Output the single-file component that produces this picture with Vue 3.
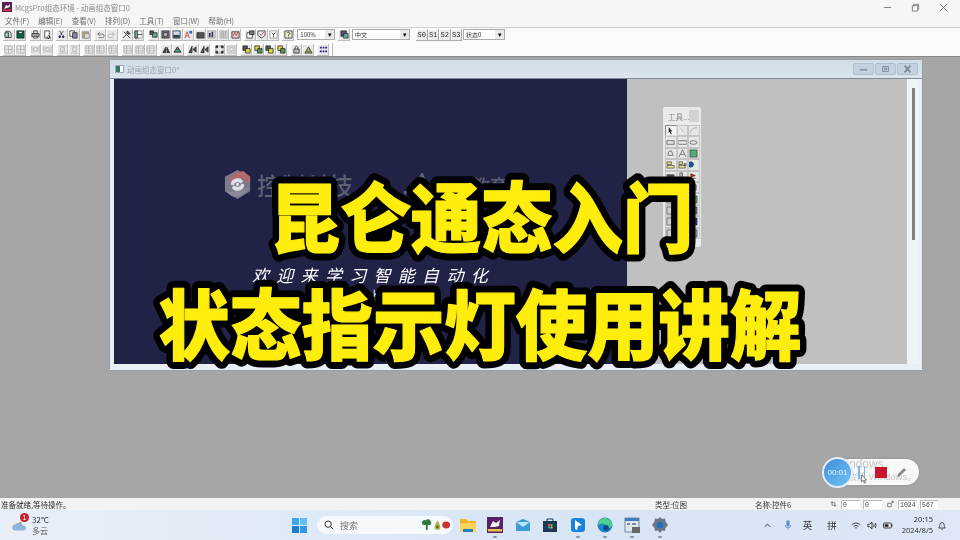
<script setup>
const menus = ['文件(F)', '编辑(E)', '查看(V)', '排列(D)', '工具(T)', '窗口(W)', '帮助(H)']
const K = '#222', G = '#8a8a8a', L = '#a8a8a8'
const icons = {
  doc: [['M2 1.500h4l2 2v5H2z', '#ddd', K], ['M1 3h4v5H1z', '#9cc', K]],
  save: [['M1 1h8v8H1z', '#064', K], ['M3 1.500h4v2.500H3z', '#eee', K]],
  print: [['M3 1h4v3H3z', '#eee', K], ['M1 4h8v3.500H1z', '#aaa', K], ['M3 7h4v2H3z', '#fff', K]],
  prev: [['M2 1h5v8H2z', '#fff', K], ['M6 6.500a1.500 1.500 0 1 0 .1 0M7 8l2 1.500', 'none', K]],
  cut: [['M3 1l3 5M7 1L4 6', 'none', K], ['M2 7.500a1 1 0 1 0 2 0a1 1 0 1 0-2 0M6 7.500a1 1 0 1 0 2 0a1 1 0 1 0-2 0', '#239', K]],
  copy: [['M1 1h5v6H1z', '#fff', K], ['M4 3h5v6H4z', '#88a', K]],
  paste: [['M1.500 2h7v7h-7z', '#b9a26a', G], ['M4 4h5v5H4z', '#ddd', G]],
  undo: [['M2 4.500h5a2 2 0 0 1 0 4H3M2 4.500l2-2M2 4.500l2 2', 'none', '#555']],
  redo: [['M8 4.500H3a2 2 0 0 0 0 4h4M8 4.500l-2-2M8 4.500l-2 2', 'none', L]],
  tools: [['M1 9l5-5M2 2l7 7M6 1l3 3-2 1-2-2z', '#666', K]],
  props: [['M1 1h8v8H1z', '#fff', G], ['M1 1h3v8H1zM4 5h5', '#7a9', K]],
  gridA: [['M1 1h4v4H1z', '#556', K], ['M4 3h5v5H4z', '#6a8', K]],
  gridB: [['M1 1h8v8H1z', '#778', K], ['M3 3h4v4H3z', '#ccc', K]],
  gridC: [['M1 1h8v8H1z', '#cde', K], ['M2 6h6v2H2z', '#156', K]],
  aa: [['M1 9l2.500-7L6 9M2 6.500h3', 'none', '#c22'], ['M6 1h3v3H6z', '#26c', 'none']],
  bar: [['M1 3h8v6H1z', '#555', K]],
  chart: [['M1 1h8v8H1z', '#eee', G], ['M2 3h2v5H2zM5 2h2v6H5z', '#335', 'none']],
  dots: [['M1 1h8v8H1z', '#ddd', L], ['M2 3h6M2 5h6M2 7h6M3 1v8M5 1v8M7 1v8', 'none', L]],
  pic: [['M1 2h8v7H1z', '#dcc', K], ['M2 7l2-4 2 3 2-4', 'none', '#c22']],
  win: [['M1 3h6v6H1z', '#fff', K], ['M4 1h5v4H4z', '#778', K]],
  check: [['M1 1h8v5L5 9 1 6z', '#eef', K], ['M3 4l1.500 2L8 2', 'none', '#a22']],
  down: [['M1 1h8v8H1z', '#fff', G], ['M3 3l2 2 2-2M5 5v3', 'none', K]],
  help: [['M1 1h8v8H1z', '#eec', K], ['M3.500 3.500a1.500 1.500 0 1 1 1.500 2v1M5 7.500v1', 'none', K]],
  lang: [['M1 1h6v6H1z', '#557', K], ['M4 4h5v5H4z', '#6a9', K]],
  a1: [['M1 1h8v8H1zM1 5h8M5 1v8', 'none', L]],
  a2: [['M1 1v8M9 1v8M3 3h4v4H3z', 'none', L]],
  a3: [['M1 1h8M1 9h8M3 3h4v4H3z', 'none', L]],
  a4: [['M1 1h8v8H1zM1 3.500h8M1 6.500h8M4 1v8', '#eee', L]],
  tri1: [['M1 8.500l3-6v6zM5.500 8.500v-6l3 6z', '#444', K]],
  tri2: [['M1 8l4-6 4 6z', '#666', K], ['M4 5h2v3H4z', '#2a7', 'none']],
  tri3: [['M1 8.500l3.500-7v7zM9 2L5.500 5 9 8z', '#555', K]],
  size: [['M1 1h8v8H1z', 'none', G], ['M1 1h2v2H1zM7 1h2v2H7zM1 7h2v2H1zM7 7h2v2H7z', '#444', K]],
  size2: [['M1 1h8v8H1zM3 3h4v4H3z', 'none', L]],
  y1: [['M1 1h5v5H1z', '#555', K], ['M4 4h5v5H4z', '#dd3', K]],
  y2: [['M1 1h5v5H1z', '#dd3', K], ['M4 4h5v5H4z', '#595', K]],
  lock: [['M2 4.500h6V9H2z', '#bbb', K], ['M3.500 4.500V3a1.500 1.500 0 0 1 3 0v1.500', 'none', K]],
  key: [['M1 9l4-7 4 7z', '#8b6', K], ['M3 7h4', 'none', '#c22']],
  dotgrid: [['M1 2h2v2H1zM4 2h2v2H4zM7 2h2v2H7zM1 6h2v2H1zM4 6h2v2H4zM7 6h2v2H7z', '#23238e', 'none']]
}
const row1 = [
  ['doc', 'save'], ['print', 'prev'], ['cut', 'copy', 'paste'], ['undo', 'redo'], ['tools', 'props'],
  ['gridA', 'gridB', 'gridC', 'aa', 'bar', 'chart', 'dots', 'pic'], ['win', 'check', 'down'], ['help']
]
const row2 = [
  ['a1', 'a1'], ['a2', 'a2'], ['a3', 'a3'], ['a4', 'a4', 'a4'], ['a4', 'a4', 'a4'], ['tri1', 'tri2'],
  ['tri3', 'tri3'], ['size', 'size2'], ['y1', 'y2', 'y1', 'y2'], ['lock', 'key'], ['dotgrid']
]
const stages = ['S0', 'S1', 'S2', 'S3']
const toolbox = [
  [['M3 1l4 5H5l1.500 3-1 .5L4 6.500 3 8z', K, 'none'], ['M2 2l6 6', 'none', L], ['M1 8a8 8 0 0 1 8-6', 'none', G]],
  [['M1 3h8v4H1z', 'none', K], ['M1.500 3h7a1 1 0 0 1 0 4h-7a1 1 0 0 1 0-4', 'none', K], ['M1 5a4 2 0 0 1 8 0a4 2 0 0 1-8 0', 'none', K]],
  [['M2 7l1-4 3-1 2 5z', 'none', K], ['M1 9l4-8 4 8M3 6h4', 'none', K], ['M1 1h8v8H1z', '#5a7', K]],
  [['M1 2h5v3H1zM1 6h8v3H1z', '#dd8', K], ['M1 2h4v3H1zM1 6h7v3H1zM7 4h2v2H7z', '#dd8', K], ['M2 2a3 3 0 1 0 .1 0', '#15a', K]],
  [['M1 3h8v6H1z', '#555', K], ['M2 1h3v8H2z', '#bbb', K], ['M2 2l5 2-5 2zM2 7h6', '#c22', K]],
  [['M1 1h8v8H1z', '#ccc', K], ['M1 1h8v8H1z', '#aaa', K], ['M2 2h6v6H2z', '#689', K]],
  [['M1 1h8v8H1z', '#ccc', K], ['M2 3h6v4H2z', '#ddd', K], ['M1 1h8v8H1z', '#5a5', K]],
  [['M1 1h8v8H1z', '#ccc', K], ['M2 3h6v4H2z', '#bbb', K], ['M1 1h8v8H1z', '#778', K]],
  [['M1 1h8v8H1z', '#ccc', K], ['M2 3h6v4H2z', '#bbb', K], ['M1 1h8v8H1z', '#33a', K]],
  [['M1 1h8v8H1z', '#ccc', K], ['M2 3h6v4H2z', '#bbb', K], ['M1 1h8v8H1z', '#8ab', K]]
]
const lines = [
  { text: '昆仑通态入门', at: 'translate(481.5 246.5) scale(.93 1)' },
  { text: '状态指示灯使用讲解', at: 'translate(480 353.5) scale(.94 1)' }
]
</script>

<template>
  <div class="screen">
    <header class="titlebar">
      <svg class="applogo" viewBox="0 0 10 10"><rect width="10" height="10" fill="#5a1c58"/><path d="M2 7l2-4 2 1 2-2v3L5 6z" fill="#eee"/><rect x="1" y="7.500" width="8" height="1.500" fill="#d33"/></svg>
      <span class="apptitle">McgsPro组态环境 - 动画组态窗口0</span>
      <div class="caption">
        <svg viewBox="0 0 10 10"><path d="M1 5h8" stroke="#777" fill="none"/></svg>
        <svg viewBox="0 0 10 10"><path d="M1.500 3h6v6h-6zM3 3V1.500h5.500V7H7.500" stroke="#777" fill="none"/></svg>
        <svg viewBox="0 0 10 10"><path d="M1 1l8 8M9 1l-8 8" stroke="#777" fill="none"/></svg>
      </div>
    </header>
    <nav class="menubar"><span v-for="m in menus" :key="m">{{ m }}</span></nav>
    <div class="toolbar first">
      <div class="tools">
        <div v-for="(g, i) in row1" :key="i" class="group">
          <i v-for="(k, j) in g" :key="j" class="btn"><svg viewBox="0 0 10 10"><path v-for="(p, n) in icons[k]" :key="n" :d="p[0]" :fill="p[1]" :stroke="p[2]" stroke-width=".8"/></svg></i>
        </div>
      </div>
      <div class="combo zoomc"><span>100%</span><b>▾</b></div>
      <i class="btn langbtn"><svg viewBox="0 0 10 10"><path v-for="(p, n) in icons.lang" :key="n" :d="p[0]" :fill="p[1]" :stroke="p[2]" stroke-width=".8"/></svg></i>
      <div class="combo langc"><span>中文</span><b>▾</b></div>
      <div class="stages"><span v-for="s in stages" :key="s">{{ s }}</span></div>
      <div class="combo statec"><span>状态0</span><b>▾</b></div>
    </div>
    <div class="toolbar second">
      <div class="tools boxed">
        <div v-for="(g, i) in row2" :key="i" class="group">
          <i v-for="(k, j) in g" :key="j" class="btn"><svg viewBox="0 0 10 10"><path v-for="(p, n) in icons[k]" :key="n" :d="p[0]" :fill="p[1]" :stroke="p[2]" stroke-width=".8"/></svg></i>
        </div>
      </div>
    </div>

    <main class="workspace">
      <section class="window">
        <div class="wintitle">
          <i class="winicon"></i>
          <span>动画组态窗口0*</span>
          <div class="winbtns">
            <i><svg viewBox="0 0 21 12"><path d="M6 7h9" stroke="#7a8794" stroke-width="1.500" fill="none"/></svg></i>
            <i><svg viewBox="0 0 21 12"><path d="M7 3h7v6H7zM9 5h3v2H9z" stroke="#7a8794" fill="none"/></svg></i>
            <i><svg viewBox="0 0 21 12"><path d="M7 2l7 8M14 2l-7 8" stroke="#7a8794" stroke-width="2" fill="none"/></svg></i>
          </div>
        </div>
        <div class="winbody">
          <div class="canvas">
            <div class="image">
              <div class="brand">
                <svg viewBox="0 0 32 32"><path d="M16 1l13 7v15l-13 8-13-8V8z" fill="#7a7a8c"/><path d="M6 13Q10 3 22 2l7 6v8q-5-7-13-6-6 1-10 3z" fill="#b56a6a"/><path d="M27 19Q22 30 10 28l-6-5q6 2 13-1 6-2 10-3z" fill="#8a8a9a"/><path d="M9 16a7 7 0 0 1 13-3l-3 2a4 4 0 0 0-7 2zM23 16a7 7 0 0 1-13 3l3-2a4 4 0 0 0 7-2z" fill="#e0e0e6"/><circle cx="16" cy="16" r="1.500" fill="#fff"/></svg>
                <span class="brandtext">控制科技</span>
                <i class="brandrule"></i>
                <svg class="wave" viewBox="0 0 26 24"><path d="M2 20Q14 18 20 2q6 12-4 20" fill="none" stroke="#66687c" stroke-width="3"/></svg>
                <span class="brandtext edu">智能教育</span>
              </div>
              <p class="slogan">欢迎来学习智能自动化</p>
              <span class="scrap">k</span>
            </div>
          </div>
          <div class="scrollbar"><i></i></div>
        </div>
      </section>

      <aside class="toolbox">
        <div class="tbhead"><span>工具...</span><i></i></div>
        <div class="tbgrid">
          <template v-for="(r, i) in toolbox" :key="i">
            <i v-for="(p, j) in r" :key="j" :class="{ active: i === 0 && j === 0 }"><svg viewBox="0 0 10 10"><path :d="p[0]" :fill="p[1]" :stroke="p[2]" stroke-width=".6"/></svg></i>
          </template>
        </div>
      </aside>

      <div class="recorder">
        <span class="watermark w1">Windows</span>
        <span class="watermark w2">激活 Windows。</span>
        <div class="rectime">00:01</div>
        <div class="pause"><i></i><i></i></div>
        <i class="stop"></i>
        <svg class="pen" viewBox="0 0 12 12"><path d="M1 11l1-3 6-6 2 2-6 6z" fill="#888"/></svg>
        <svg class="cursor" viewBox="0 0 10 14"><path d="M1 1v10l2.500-2 1.500 4 1.500-.6L5 8.500h3z" fill="#fff" stroke="#222" stroke-width=".8"/></svg>
      </div>
    </main>

    <footer class="statusbar">
      <span class="ready">准备就绪,等待操作。</span>
      <span class="stype">类型:位图</span>
      <span class="sname">名称:控件6</span>
      <svg class="sic" viewBox="0 0 10 10"><path d="M1 3h6v6M3 1v6h6" fill="none" stroke="#666"/></svg>
      <span class="sbox">0</span><span class="sbox">0</span>
      <svg class="sic second-ic" viewBox="0 0 10 10"><path d="M1 4h5v5H1zM7 1h2v2H7z" fill="none" stroke="#555"/></svg>
      <span class="sbox">1024</span><span class="sbox small">567</span>
    </footer>

    <div class="taskbar">
      <div class="weather">
        <svg viewBox="0 0 20 18"><path d="M2 8L12 4l-1 4z" fill="#e8a63c"/><path d="M3 15a3.500 3.500 0 0 1 1-7 5 5 0 0 1 9 1 3 3 0 0 1 1 6z" fill="#8fb4dc"/></svg>
        <b class="badge">1</b>
        <div class="wtext"><span>32°C</span><span class="cloud">多云</span></div>
      </div>
      <div class="center">
        <svg class="winlogo" viewBox="0 0 16 16"><path d="M0 0h7.500v7.500H0z" fill="#3fa7e6"/><path d="M8.500 0H16v7.500H8.500z" fill="#5cc0f2"/><path d="M0 8.500h7.500V16H0z" fill="#1a7fd0"/><path d="M8.500 8.500H16V16H8.500z" fill="#2f98e0"/></svg>
        <div class="search">
          <svg viewBox="0 0 12 12"><circle cx="5" cy="5" r="3.800" fill="none" stroke="#333" stroke-width="1.200"/><path d="M8 8l3 3" stroke="#333" stroke-width="1.200"/></svg>
          <span>搜索</span>
          <div class="veg">
            <svg viewBox="0 0 30 12"><path d="M1 4a3 3 0 0 1 4-3 3 3 0 0 1 5 1 2.500 2.500 0 0 1-1 4H7v5H5V6H3a2 2 0 0 1-2-2z" fill="#2e7a3c"/><path d="M17 1q3 5 3 7a3 3 0 0 1-6 0q0-2 3-7z" fill="#a9b54a"/><circle cx="17" cy="8" r="1.400" fill="#7a5a20"/><ellipse cx="26" cy="6" rx="4" ry="3.500" fill="#c8352d"/></svg>
          </div>
        </div>
        <span class="app"><svg viewBox="0 0 16 16"><path d="M0 2h6l2 2h8v11H0z" fill="#f0b429"/><path d="M0 6h16v9H0z" fill="#fad45a"/><path d="M3 12h10v3H3z" fill="#1c7fc4"/></svg></span>
        <span class="app run"><svg viewBox="0 0 16 16"><rect width="16" height="16" fill="#5b1f66"/><path d="M3 10l3-6 3 2 4-3-1 6-4 1z" fill="#eee"/><rect x="1" y="12" width="14" height="2.500" fill="#e8c547"/></svg></span>
        <span class="app"><svg viewBox="0 0 16 16"><path d="M1 5l7-3 7 3v9H1z" fill="#3c9ad8"/><path d="M1 5l7 5 7-5" fill="#bfe3f7"/></svg></span>
        <span class="app"><svg viewBox="0 0 16 16"><path d="M1 4h14v11H1z" fill="#1c3a56"/><path d="M5 4V2h6v2" fill="none" stroke="#1c3a56"/><path d="M6 7h2v2H6z" fill="#e25a3c"/><path d="M8.500 7h2v2h-2z" fill="#7cb342"/><path d="M6 9.500h2v2H6z" fill="#29a8e0"/><path d="M8.500 9.500h2v2h-2z" fill="#f4c430"/></svg></span>
        <span class="app run"><svg viewBox="0 0 16 16"><rect x="1" y="1" width="14" height="14" rx="3" fill="#1a83e0"/><path d="M5 3l7 5-4 1-1 4-2-1z" fill="#fff"/></svg></span>
        <span class="app run"><svg viewBox="0 0 16 16"><circle cx="8" cy="8" r="7.500" fill="#1d88c9"/><path d="M1 8a7 7 0 0 1 14 0q0 3-4 3-3 0-2-3-3-3-8 0z" fill="#4fd08a"/><circle cx="9" cy="11" r="3" fill="#0d4f8b"/></svg></span>
        <span class="app run"><svg viewBox="0 0 16 16"><rect x="1" y="1" width="14" height="14" fill="#dfe6ee" stroke="#7a8aa0"/><path d="M1 1h14v3H1z" fill="#3f7fc0"/><path d="M3 6h3v2H3zM8 6h4v2H8z" fill="#88a"/><rect x="8" y="10" width="8" height="6" fill="#666"/></svg></span>
        <span class="app run"><svg viewBox="0 0 16 16"><path d="M8 0l2 2 3-.5.500 3L16 8l-2.500 3-.5 3-3-.5L8 16l-2-2.500-3 .5-.5-3L0 8l2.500-3.500.5-3 3 .5z" fill="#6d7480"/><circle cx="8" cy="8" r="3.200" fill="#1f6fbf"/></svg></span>
      </div>
      <div class="tray">
        <svg class="chev" viewBox="0 0 10 6"><path d="M1 5l4-4 4 4" fill="none" stroke="#222" stroke-width="1.200"/></svg>
        <svg class="mic" viewBox="0 0 10 14"><rect x="3" y="1" width="4" height="8" rx="2" fill="#5a8ed0"/><path d="M1.500 7a3.500 3.500 0 0 0 7 0M5 11v2" fill="none" stroke="#5a8ed0"/></svg>
        <span class="ime">英</span>
        <span class="ime pin">拼</span>
        <svg class="sys" viewBox="0 0 12 10"><path d="M1 4q5-4 10 0M3 6q3-2.500 6 0M5 8q1-1 2 0" fill="none" stroke="#222"/></svg>
        <svg class="sys" viewBox="0 0 12 10"><path d="M1 3.500h2L6 1v8L3 6.500H1z" fill="none" stroke="#222"/><path d="M8 3q1 2 0 4M10 2q1.500 3 0 6" fill="none" stroke="#222"/></svg>
        <svg class="sys" viewBox="0 0 12 10"><rect x=".5" y="2" width="9.500" height="6" rx="1" fill="none" stroke="#222"/><rect x="2" y="3.500" width="4.500" height="3" fill="#222"/><path d="M11 4v2" stroke="#222"/></svg>
        <div class="clock"><span>20:15</span><span>2024/8/5</span></div>
        <svg class="bell" viewBox="0 0 12 12"><path d="M2 9q1.500-1 1.500-4a2.500 2.500 0 0 1 5 0q0 3 1.500 4zM5 10.500h2" fill="none" stroke="#333"/></svg>
      </div>
    </div>

    <svg class="headline" viewBox="0 0 960 540">
      <g v-for="l in lines" :key="l.text" :transform="l.at">
        <text class="outline" aria-hidden="true">{{ l.text }}</text>
        <text class="face">{{ l.text }}</text>
      </g>
    </svg>
  </div>
</template>

<style scoped>
.screen { position: relative; width: 960px; height: 540px; overflow: hidden; display: flex; flex-direction: column; font-family: "Noto Sans CJK SC", "Noto Sans", sans-serif; color: #555; background: #a5a5a5; filter: blur(.35px); }
.screen * { box-sizing: border-box; }
i { display: block; font-style: normal; }
.titlebar { height: 14px; display: flex; align-items: center; padding-left: 2px; background: #f6f6f6; font-size: 7.500px; color: #8c8c8c; flex: none; }
.applogo { width: 10px; height: 10px; margin-right: 3px; }
.caption { margin-left: auto; display: flex; gap: 19px; padding-right: 12px; }
.caption svg { width: 9px; height: 9px; }
.menubar { height: 13px; display: flex; align-items: center; gap: 9px; padding-left: 5px; background: #f6f6f6; font-size: 7.500px; color: #6c6c6c; flex: none; }
.toolbar { height: 14px; display: flex; align-items: center; padding-left: 3px; background: #fafafa; flex: none; border-top: 1px solid #d0d0d0; }
.toolbar.second { height: 15px; border-top: 0; align-items: flex-start; padding-top: 2px; }
.tools { display: flex; height: 13px; align-items: center; }
.tools.boxed { border-right: 1px solid #bbb; height: 13px; }
.group { display: flex; margin-right: 3.200px; }
.second .group { margin-right: 3.400px; }
.btn { width: 11.700px; height: 12px; display: flex; align-items: center; justify-content: center; background: #e8e8e8; box-shadow: inset -1px -1px 0 #bdbdbd, inset 1px 1px 0 #fff; }
.btn svg { width: 9px; height: 9px; }
.combo { height: 11px; display: flex; align-items: center; background: #fff; border: 1px solid #aaa; font-size: 6px; color: #333; padding-left: 2px; }
.combo span { flex: 1; }
.combo b { width: 9px; height: 9px; background: #e8e8e8; text-align: center; font-size: 7px; line-height: 9px; color: #000; font-weight: 400; }
.zoomc { width: 38px; margin-left: 0; }
.langbtn { margin-left: 3px; margin-right: 2px; }
.langc { width: 58px; }
.stages { display: flex; margin-left: 6px; }
.stages span { width: 11.500px; height: 12px; font: 7px "Liberation Mono", monospace; text-align: center; line-height: 12px; color: #333; background: #ececec; box-shadow: inset -1px -1px 0 #aaa, inset 1px 1px 0 #fff; }
.statec { width: 42px; margin-left: 1px; }
.workspace { position: relative; flex: 1; background: #a6a6a6; border-top: 1px solid #888; }
.window { position: absolute; left: 109px; top: 2px; width: 814px; height: 312px; background: #e9eff5; border: 1px solid #9a9fa5; border-radius: 3px 3px 0 0; display: flex; flex-direction: column; }
.wintitle { height: 18px; flex: none; display: flex; align-items: center; padding-left: 5px; font-size: 7.500px; color: #9aa4ae; background: linear-gradient(#cfdce6, #dbe5ed); }
.winicon { width: 9px; height: 8px; margin-right: 3px; background: linear-gradient(90deg, #2f7a5c 50%, #fff 50%); border: 1px solid #9ab; }
.winbtns { margin-left: auto; display: flex; gap: 1px; padding-right: 4px; }
.winbtns i { width: 21px; height: 12px; background: #c3d2de; border: 1px solid #aebfce; border-radius: 2px; display: flex; }
.winbtns svg { width: 100%; height: 100%; }
.winbody { flex: 1; display: flex; padding: 0 3px 6px 4px; min-height: 0; border-top: 1px solid #7d8b98; }
.canvas { flex: 1; background: #c0c0c0; }
.image { position: relative; width: 513px; height: 100%; background: #202345; overflow: hidden; }
.brand { position: absolute; left: 108px; top: 90px; display: flex; align-items: center; white-space: nowrap; }
.brand > svg:first-child { width: 31px; height: 31px; margin-right: 4px; }
.brandtext { font-size: 24px; font-weight: 500; line-height: 30px; color: #5d5f72; }
.brandrule { width: 2px; height: 20px; background: #5d5f72; margin: 0 27px 0 20px; }
.wave { width: 26px; height: 24px; margin-right: 8px; }
.edu { font-size: 18px; }
.slogan { position: absolute; left: 138px; top: 185px; margin: 0; font-size: 17px; line-height: 22px; letter-spacing: 7.300px; font-style: italic; font-weight: 400; color: #fff; white-space: nowrap; }
.scrap { position: absolute; left: 259px; top: 209px; font-size: 9px; line-height: 12px; color: #fff; }
.scrollbar { width: 12px; flex: none; background: #f0f3f6; display: flex; justify-content: center; padding-top: 9px; }
.scrollbar i { width: 3px; height: 152px; background: #808080; }
.toolbox { position: absolute; left: 663px; top: 50px; width: 38px; height: 140px; padding: 1px; background: #e9eaeb; border-radius: 2px; }
.tbhead { height: 16px; display: flex; justify-content: space-between; align-items: center; padding: 0 1px 0 4px; font-size: 7.500px; color: #8a8a8a; white-space: nowrap; }
.tbhead i { width: 10px; height: 12px; background: #d2d2d2; flex: none; }
.tbgrid { display: grid; grid-template-columns: repeat(3, 11.500px); grid-auto-rows: 11.400px; margin-top: 1px; margin-left: 1px; }
.tbgrid i { border: 1px solid #c4c4c4; background: #e6e6e6; display: flex; align-items: center; justify-content: center; }
.tbgrid i.active { background: #f4f4f4; border-color: #888 #ddd #ddd #888; }
.tbgrid svg { width: 9px; height: 9px; }
.recorder { position: absolute; left: 823px; top: 402px; width: 96px; height: 26px; border-radius: 13px; background: rgba(255, 255, 255, .92); box-shadow: 0 0 3px rgba(0, 0, 0, .15); }
.watermark { position: absolute; color: #c6c6c6; white-space: nowrap; font-family: "Liberation Sans", "Noto Sans CJK SC", sans-serif; }
.w1 { left: 12px; top: -2px; font-size: 12px; line-height: 14px; }
.w2 { left: 24px; top: 12px; font-size: 9.500px; line-height: 12px; }
.rectime { position: absolute; left: -1px; top: -2px; width: 31px; height: 31px; border: 2px solid #e2eefa; border-radius: 50%; background: linear-gradient(135deg, #3d8fdb, #74c0f5); color: #e8f4ff; font: 8px/27px "Liberation Sans", sans-serif; text-align: center; }
.pause { position: absolute; left: 35px; top: 7px; display: flex; gap: 4px; }
.pause i { width: 1.500px; height: 13px; background: #7fb5e0; }
.stop { position: absolute; left: 52px; top: 8px; width: 12px; height: 11px; background: #c8142c; }
.pen { position: absolute; left: 73px; top: 7px; width: 12px; height: 12px; }
.cursor { position: absolute; left: 38px; top: 15px; width: 7px; height: 10px; }
.statusbar { height: 12px; flex: none; display: flex; align-items: center; position: relative; background: #f3f3f3; font-size: 7.500px; color: #333; }
.ready { margin-left: 1px; width: 654px; }
.stype { width: 100px; }
.sname { width: 75px; }
.sic { width: 7px; height: 8px; margin-right: 4px; }
.second-ic { margin-left: 2px; margin-right: 4px; }
.sbox { width: 19px; height: 9px; margin-right: 3px; background: #fff; border: 1px solid #bbb; border-width: 1px 0 0 1px; font: 6.500px/9px "Liberation Mono", monospace; color: #444; padding-left: 1px; }
.sbox.small { width: 18px; }
.taskbar { height: 30px; flex: none; display: flex; position: relative; background: linear-gradient(90deg, #e9eff7 0%, #e0ebf7 25%, #d8e5f5 60%, #dde7f5 100%); }
.weather { position: relative; display: flex; align-items: center; padding-left: 12px; }
.weather > svg { width: 17px; height: 15px; }
.badge { position: absolute; left: 20px; top: 3px; width: 9px; height: 9px; border-radius: 50%; background: #c8202a; color: #fff; font: 7px/9px "Liberation Sans", sans-serif; text-align: center; }
.wtext { display: flex; flex-direction: column; margin-left: 3px; font-size: 8px; line-height: 11px; color: #333; }
.cloud { color: #666; }
.center { position: absolute; left: 292px; top: 0; height: 100%; display: flex; align-items: center; }
.winlogo { width: 15px; height: 15px; margin-right: 10px; }
.search { width: 136px; height: 18px; display: flex; align-items: center; padding: 0 3px 0 7px; background: #f6f9fc; border-radius: 9px; font-size: 9px; color: #777; margin-right: 7px; }
.search > svg { width: 10px; height: 10px; margin-right: 6px; }
.veg { margin-left: auto; }
.veg svg { width: 29px; height: 12px; display: block; }
.app { position: relative; display: block; width: 16px; height: 16px; margin-right: 11.400px; }
.app svg { display: block; width: 16px; height: 16px; }
.run::after { content: ""; position: absolute; left: 6px; top: 19px; width: 4px; height: 2px; border-radius: 1px; background: #8a93a0; }
.tray { margin-left: auto; display: flex; align-items: center; padding-right: 13px; color: #222; }
.chev { width: 7px; height: 5px; margin-right: 13px; }
.mic { width: 8px; height: 12px; margin-right: 11px; }
.ime { font-size: 9.500px; color: #333; margin-right: 15px; }
.pin { margin-right: 14px; }
.sys { width: 10px; height: 9px; margin-right: 6px; }
.clock { display: flex; flex-direction: column; align-items: flex-end; font: 7.500px/11px "Noto Sans", sans-serif; color: #333; margin: 0 4px 0 3px; }
.bell { width: 10px; height: 11px; }
.headline { position: absolute; left: 0; top: 0; width: 960px; height: 540px; pointer-events: none; }
.headline text { font-size: 76px; font-weight: 900; text-anchor: middle; stroke-linejoin: round; stroke-linecap: round; font-family: "Noto Sans CJK SC", sans-serif; }
.outline { fill: #000; stroke: #000; stroke-width: 15px; }
.face { fill: #ffed0c; stroke: #ffed0c; stroke-width: 1.200px; }
</style>

<style>
html, body { margin: 0; padding: 0; background: #a5a5a5; }
</style>
